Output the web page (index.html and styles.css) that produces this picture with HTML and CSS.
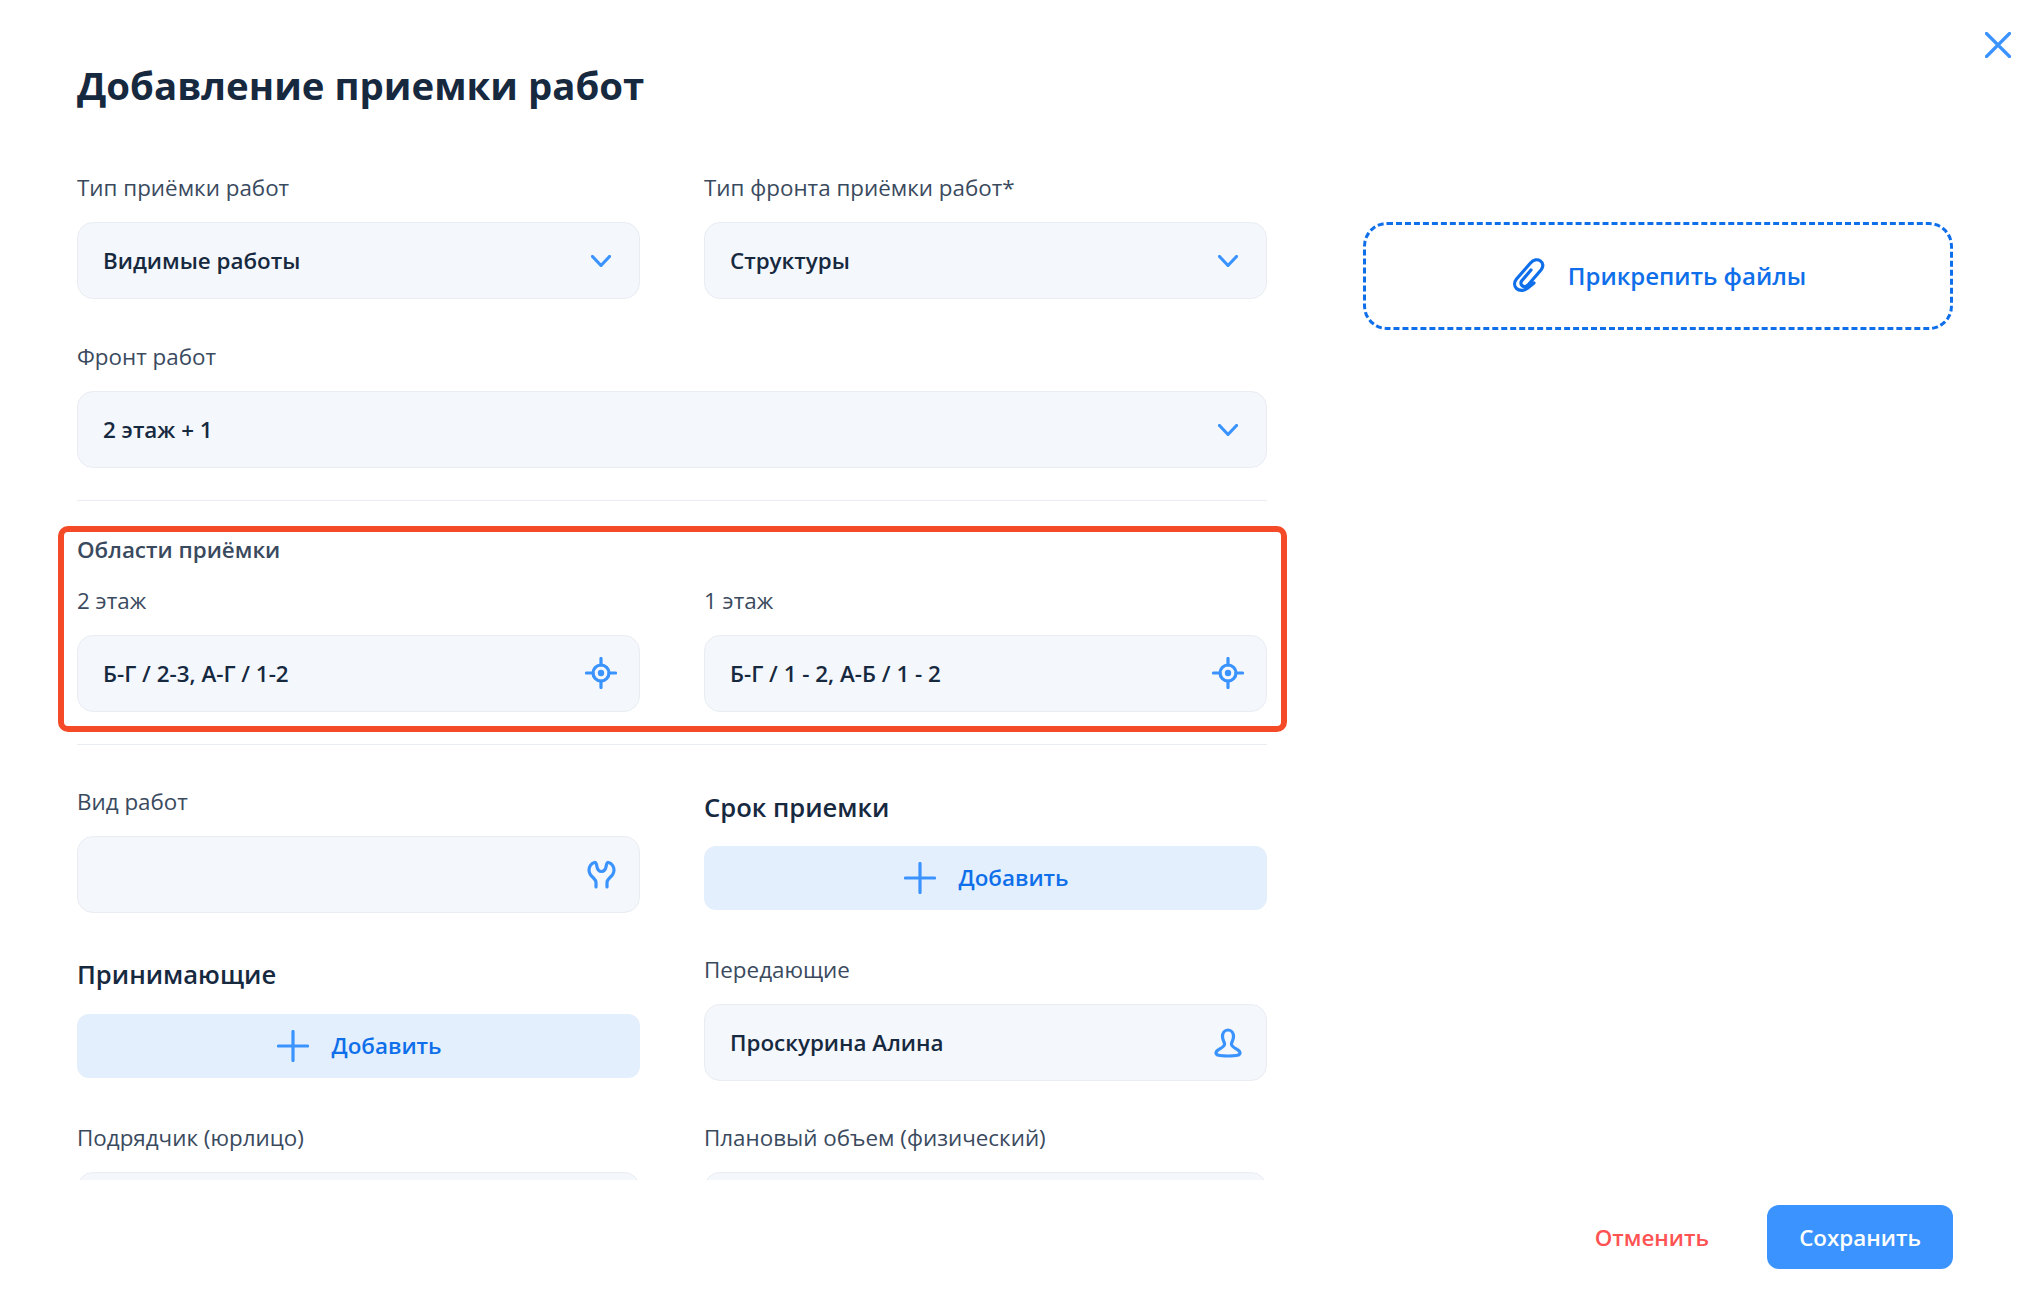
FILE: index.html
```html
<!DOCTYPE html>
<html lang="ru">
<head>
<meta charset="utf-8">
<title>Добавление приемки работ</title>
<link rel="stylesheet" href="styles.css">
</head>
<body>
<div class="modal">
  <button class="close" aria-label="Закрыть">
    <svg class="close-icon" viewBox="0 0 26 26"><path d="M1.5 1.5 24.5 24.5M24.5 1.5 1.5 24.5"/></svg>
  </button>
  <h1 class="title">Добавление приемки работ</h1>
  <div class="content">
    <form class="form">
      <div class="grid">
        <div class="cell">
          <div class="label">Тип приёмки работ</div>
          <div class="field"><span class="value">Видимые работы</span><svg class="chevron" viewBox="0 0 20 12"><path d="M1.5 1.5 10 10.5 18.5 1.5"/></svg></div>
        </div>
        <div class="cell">
          <div class="label">Тип фронта приёмки работ*</div>
          <div class="field"><span class="value">Структуры</span><svg class="chevron" viewBox="0 0 20 12"><path d="M1.5 1.5 10 10.5 18.5 1.5"/></svg></div>
        </div>
        <div class="cell wide">
          <div class="label">Фронт работ</div>
          <div class="field"><span class="value">2 этаж + 1</span><svg class="chevron" viewBox="0 0 20 12"><path d="M1.5 1.5 10 10.5 18.5 1.5"/></svg></div>
        </div>
      </div>
      <hr class="divider first">
      <section class="areas">
        <div class="highlight"></div>
        <div class="areas-title">Области приёмки</div>
        <div class="grid">
          <div class="cell">
            <div class="label">2 этаж</div>
            <div class="field"><span class="value">Б-Г / 2-3, А-Г / 1-2</span><svg class="icon" viewBox="0 0 32 32"><circle cx="16" cy="16" r="8"/><circle class="dot" cx="16" cy="16" r="3.2"/><path d="M16 1.5V8M16 24V30.5M1.5 16H8M24 16H30.5"/></svg></div>
          </div>
          <div class="cell">
            <div class="label">1 этаж</div>
            <div class="field"><span class="value">Б-Г / 1 - 2, А-Б / 1 - 2</span><svg class="icon" viewBox="0 0 32 32"><circle cx="16" cy="16" r="8"/><circle class="dot" cx="16" cy="16" r="3.2"/><path d="M16 1.5V8M16 24V30.5M1.5 16H8M24 16H30.5"/></svg></div>
          </div>
        </div>
      </section>
      <hr class="divider second">
      <div class="grid lower">
        <div class="cell">
          <div class="label">Вид работ</div>
          <div class="field"><span class="value"></span><svg class="icon" viewBox="0 0 32 32"><path d="M11 29V24.500C11 22.500 10 21.500 8.500 20 5.500 17.500 4 15 4 12 4 8.500 6.500 5 9.500 4.500 11 4.200 11.500 6 11.800 8 12.300 11.500 14 13.500 16.500 13.500 19 13.500 20.700 11.500 21.200 8 21.500 6 22 4.200 23.500 4.500 26.500 5 29 8.500 29 12 29 15 27.500 17.500 24.500 20 23 21.500 22 22.500 22 24.500V29"/></svg></div>
        </div>
        <div class="cell">
          <div class="heading deadline">Срок приемки</div>
          <button type="button" class="add"><svg class="plus" viewBox="0 0 32 32"><path d="M16 1.500V30.500M1.500 16H30.500"/></svg>Добавить</button>
        </div>
        <div class="cell">
          <div class="heading receivers">Принимающие</div>
          <button type="button" class="add"><svg class="plus" viewBox="0 0 32 32"><path d="M16 1.500V30.500M1.500 16H30.500"/></svg>Добавить</button>
        </div>
        <div class="cell">
          <div class="label">Передающие</div>
          <div class="field"><span class="value">Проскурина Алина</span><svg class="icon" viewBox="0 0 32 32"><path d="M16 3C12.500 3 10.500 6 10.500 9.500 10.500 12.500 12 14.500 12.500 16.500 13 18.500 11 20 8.500 21.500 5.500 23 4 24.500 4 26 4 28 6.500 29 16 29 25.500 29 28 28 28 26 28 24.500 26.500 23 23.500 21.500 21 20 19 18.500 19.500 16.500 20 14.500 21.500 12.500 21.500 9.500 21.500 6 19.500 3 16 3Z"/></svg></div>
        </div>
        <div class="cell">
          <div class="label">Подрядчик (юрлицо)</div>
          <div class="field"></div>
        </div>
        <div class="cell">
          <div class="label">Плановый объем (физический)</div>
          <div class="field"></div>
        </div>
      </div>
    </form>
    <aside class="side">
      <button type="button" class="attach"><svg class="clip" viewBox="0 0 32 34"><path d="M21 25 14.500 30.300C11 33 6 33 3.500 30.500 1 28 1 24 3.500 21L17.500 5C20.500 1.500 24.500 1 27.500 3 30.500 5 30.500 9 28 12L15 27C13 29 10.500 29 9 27.500 7.500 26 7.500 24 9 22.500L18 12"/></svg>Прикрепить файлы</button>
    </aside>
  </div>
  <footer class="footer">
    <button type="button" class="cancel">Отменить</button>
    <button type="button" class="save">Сохранить</button>
  </footer>
</div>
</body>
</html>
```
FILE: styles.css
```css
* { box-sizing: border-box; }
html, body { margin: 0; height: 100%; background: #fff; overflow: hidden; }
body { font-family: "Open Sans", "Noto Sans", sans-serif; color: #17293f; }
button { font-family: inherit; border: 0; background: none; padding: 0; }

.modal { position: relative; height: 1310px; display: flex; flex-direction: column; padding: 57px 89px 41px 77px; }
.close { position: absolute; top: 32px; right: 31px; width: 26px; height: 26px; }
.close-icon { display: block; width: 26px; height: 26px; fill: none; stroke: #3a93ff; stroke-width: 3.2; stroke-linecap: round; }

.title { margin: 0; font-size: 38.4px; line-height: 56px; font-weight: 700; color: #17293f; }

.content { flex: 1; min-height: 0; margin: 59px 0 0 -19px; padding-left: 19px; display: flex; gap: 96px; overflow: hidden; }
.form { width: 1190px; flex: none; }
.grid { display: grid; grid-template-columns: 563px 563px; column-gap: 64px; row-gap: 42px; }
.grid.lower { row-gap: 41.5px; }
.wide { grid-column: 1 / 3; }

.label { font-size: 22.4px; line-height: 32px; margin-bottom: 18px; color: #3a4a5e; }
.field { height: 76.8px; display: flex; align-items: center; justify-content: space-between; padding: 0 22px 0 25px; background: #f4f8fd; border: 1px solid #e9edf1; border-radius: 16px; }
.value { font-size: 22.4px; font-weight: 600; color: #17293f; }
.chevron { display: block; width: 20px; height: 12px; margin: 2px 6px 0 0; fill: none; stroke: #3a93ff; stroke-width: 3.2; stroke-linecap: round; stroke-linejoin: round; }
.icon { display: block; flex: none; width: 32px; height: 32px; fill: none; stroke: #3a93ff; stroke-width: 3.2; stroke-linecap: round; stroke-linejoin: round; }
.dot { fill: #3a93ff; stroke: none; }

.divider { margin: 0; border: 0; height: 1px; background: #e9edf1; }
.divider.first { margin-top: 32px; }
.divider.second { margin-top: 32px; margin-bottom: 41px; }

.areas { position: relative; padding-top: 33px; }
.highlight { position: absolute; left: -19px; right: -20px; top: 25px; height: 206px; border: 6px solid #f44a27; border-radius: 10px; pointer-events: none; }
.areas-title { font-size: 22.4px; line-height: 32px; font-weight: 600; margin-bottom: 19.5px; color: #3a4a5e; }

.heading { font-size: 25.6px; line-height: 32px; font-weight: 600; color: #17293f; }
.deadline { margin-top: 6.5px; margin-bottom: 21.6px; }
.receivers { margin-top: 5.2px; margin-bottom: 22.6px; }

.add { width: 100%; height: 64px; display: flex; align-items: center; justify-content: center; gap: 22px; padding-left: 2px; background: #e3effd; border-radius: 12px; font-size: 22.4px; font-weight: 600; color: #0f6fea; }
.plus { display: block; width: 32px; height: 32px; fill: none; stroke: #3a93ff; stroke-width: 3.2; stroke-linecap: round; }

.side { width: 590px; flex: none; padding-top: 50px; }
.attach { width: 100%; height: 108px; display: flex; align-items: center; justify-content: center; gap: 23px; padding: 0 0 2px 3px; border: 3.2px dashed #0f6fea; border-radius: 24px; font-size: 24px; font-weight: 600; color: #0f6fea; }
.clip { display: block; width: 32px; height: 34px; fill: none; stroke: #0f6fea; stroke-width: 3.2; stroke-linecap: round; stroke-linejoin: round; }

.footer { display: flex; justify-content: flex-end; align-items: center; gap: 58px; margin-top: 25px; height: 64px; flex: none; }
.cancel { font-size: 22.4px; font-weight: 600; color: #ff5252; }
.save { width: 186px; height: 64px; background: #3a93ff; border-radius: 12px; font-size: 22.4px; font-weight: 600; color: #fff; }
```
